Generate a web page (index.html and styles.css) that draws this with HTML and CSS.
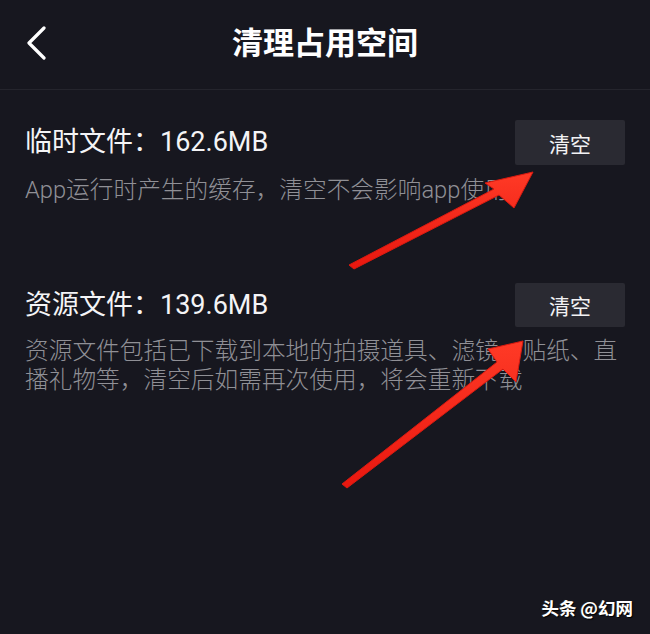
FILE: index.html
```html
<!DOCTYPE html>
<html lang="zh-CN">
<head>
<meta charset="utf-8">
<title>清理占用空间</title>
<link rel="stylesheet" href="styles.css">
</head>
<body>
<div class="screen">
  <header class="topbar">
    <div class="back">
      <svg width="22" height="34" viewBox="0 0 22 34"><polyline points="18,2 3,17 18,32" fill="none" stroke="#ffffff" stroke-width="3.2" stroke-linecap="round" stroke-linejoin="round"/></svg>
    </div>
    <h1 class="title">清理占用空间</h1>
    <div class="spacer"></div>
  </header>

  <main class="list">
    <section class="item item-first">
      <div class="row">
        <div class="name">临时文件：162.6MB</div>
        <button class="btn">清空</button>
      </div>
      <p class="desc">App运行时产生的缓存，清空不会影响app使用</p>
    </section>
    <section class="item item-second">
      <div class="row">
        <div class="name">资源文件：139.6MB</div>
        <button class="btn">清空</button>
      </div>
      <p class="desc">资源文件包括已下载到本地的拍摄道具、滤镜、贴纸、直播礼物等，清空后如需再次使用，将会重新下载</p>
    </section>
  </main>

  <svg class="arrows" width="650" height="634" viewBox="0 0 650 634">
    <defs>
      <linearGradient id="rg" x1="0" y1="0" x2="0" y2="1">
        <stop offset="0" stop-color="#ff3a26"/>
        <stop offset="1" stop-color="#e8170f"/>
      </linearGradient>
    </defs>
    <polygon points="349,265 494,189 485,183 533,172 514,208 499,195 354,269" fill="url(#rg)" stroke="#d81a10" stroke-width="1" stroke-linejoin="round"/>
    <polygon points="342,484 497,362 488,349 523,341 516,382 503,369 347,488" fill="url(#rg)" stroke="#d81a10" stroke-width="1" stroke-linejoin="round"/>
  </svg>

  <div class="watermark">头条 @幻网</div>
</div>
</body>
</html>
```

FILE: styles.css
```css
html, body {
  margin: 0;
  padding: 0;
  background: #17171f;
}

.screen {
  position: relative;
  width: 650px;
  height: 634px;
  overflow: hidden;
  background: #17171f;
  font-family: Roboto, "Noto Sans CJK SC", sans-serif;
  color: #ffffff;
}

.topbar {
  height: 89px;
  border-bottom: 1px solid #25252d;
  display: grid;
  grid-template-columns: 1fr auto 1fr;
  align-items: center;
}

.back {
  padding-left: 26px;
  display: flex;
  align-items: center;
  height: 34px;
  margin-top: -4px;
}

.title {
  margin: 0;
  font-size: 31px;
  font-weight: 700;
  line-height: 1;
  letter-spacing: 0;
  margin-top: -3px;
}

.list {
  padding: 0 25px 0 25px;
}

.item-first {
  padding-top: 30px;
}

.item-second {
  padding-top: 78px;
}

.row {
  display: flex;
  align-items: center;
  justify-content: space-between;
  height: 45px;
}

.item-second .row {
  height: 44px;
}

.name {
  font-size: 27px;
  line-height: 1;
  color: #f4f4f6;
}

.btn {
  width: 110px;
  height: 100%;
  border: none;
  background: #2a2a32;
  color: #f2f2f4;
  font-family: Roboto, "Noto Sans CJK SC", sans-serif;
  font-size: 21px;
  padding: 0;
  border-radius: 2px;
}

.desc {
  margin: 11px 0 0 0;
  width: 600px;
  font-size: 23.7px;
  font-weight: 300;
  line-height: 29px;
  color: #909096;
}

.item-second .desc {
  margin-top: 10px;
}

.arrows {
  position: absolute;
  left: 0;
  top: 0;
  pointer-events: none;
}

.watermark {
  position: absolute;
  right: 17px;
  bottom: 14px;
  font-size: 17.5px;
  font-weight: 700;
  color: #ffffff;
  text-shadow: 1px 1px 1px #000000, -1px 0 1px #333;
  font-family: "Noto Sans CJK SC", sans-serif;
}
```
